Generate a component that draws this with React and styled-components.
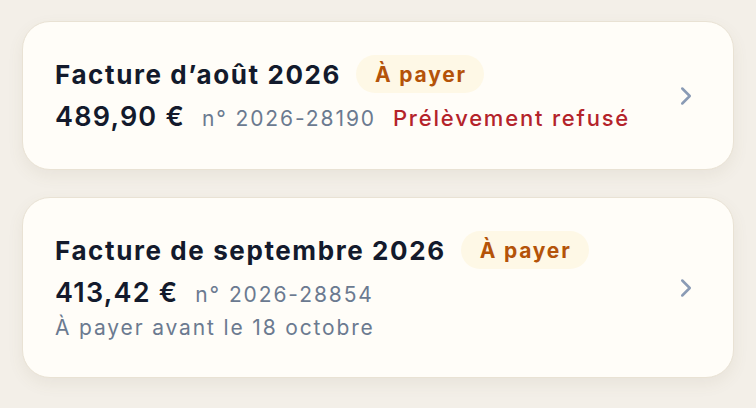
import React from 'react'
import styled, { createGlobalStyle } from 'styled-components'

const GlobalStyle = createGlobalStyle`
  html, body {
    margin: 0;
    background: #f3efe8;
  }
  body {
    font-family: Inter, "Noto Sans", sans-serif;
    -webkit-font-smoothing: antialiased;
  }
`

const invoices = [
  {
    title: 'Facture d’août 2026',
    status: 'À payer',
    amount: '489,90 €',
    number: 'n° 2026-28190',
    alert: 'Prélèvement refusé',
  },
  {
    title: 'Facture de septembre 2026',
    status: 'À payer',
    amount: '413,42 €',
    number: 'n° 2026-28854',
    note: 'À payer avant le 18 octobre',
  },
]

function Chevron() {
  return (
    <svg width="30" height="30" viewBox="0 0 24 24" fill="none" stroke="currentColor"
      strokeWidth="2" strokeLinecap="round" strokeLinejoin="round">
      <path d="m9 18 6-6-6-6" />
    </svg>
  )
}

export default function App() {
  return (
    <>
      <GlobalStyle />
      <List>
        {invoices.map((inv) => (
          <Card key={inv.number}>
            <Body>
              <TitleRow>
                <Title>{inv.title}</Title>
                <Badge>{inv.status}</Badge>
              </TitleRow>
              <AmountRow>
                <Amount>{inv.amount}</Amount>
                <Number>{inv.number}</Number>
                {inv.alert && <Alert>{inv.alert}</Alert>}
              </AmountRow>
              {inv.note && <Note>{inv.note}</Note>}
            </Body>
            <Arrow>
              <Chevron />
            </Arrow>
          </Card>
        ))}
      </List>
    </>
  )
}

const List = styled.div`
  display: flex;
  flex-direction: column;
  gap: 27px;
  padding: 21px 22px;
`
const Card = styled.div`
  display: flex;
  align-items: center;
  background: #fffdf8;
  border: 1px solid #e9e2d4;
  border-radius: 28px;
  padding: 33px 32px;
  box-shadow: 0 6px 16px rgba(120, 100, 60, 0.08);
`
const Body = styled.div`
  flex: 1;
  display: flex;
  flex-direction: column;
`
const TitleRow = styled.div`
  display: flex;
  align-items: center;
  gap: 15px;
  height: 38px;
  margin-bottom: 7px;
`
const Title = styled.div`
  font-size: 26px;
  font-weight: 700;
  color: #131a2c;
  letter-spacing: 1.6px;
`
const Badge = styled.span`
  display: inline-flex;
  align-items: center;
  height: 38px;
  padding: 0 17px 0 19px;
  border-radius: 19px;
  background: #fef8e6;
  color: #b45309;
  font-size: 21px;
  font-weight: 700;
  letter-spacing: 1.8px;
`
const AmountRow = styled.div`
  display: flex;
  align-items: baseline;
  gap: 17px;
  height: 36px;
`
const Amount = styled.span`
  font-size: 27px;
  font-weight: 600;
  color: #131a2c;
  letter-spacing: 1.2px;
`
const Number = styled.span`
  font-size: 21px;
  color: #6b7a90;
  letter-spacing: 1.9px;
`
const Alert = styled.span`
  font-size: 22px;
  font-weight: 500;
  color: #b4232a;
  letter-spacing: 1.8px;
`
const Note = styled.div`
  font-size: 21px;
  color: #6b7a90;
  line-height: 32px;
  letter-spacing: 1.85px;
`
const Arrow = styled.div`
  display: flex;
  color: #8a9bb5;
`
